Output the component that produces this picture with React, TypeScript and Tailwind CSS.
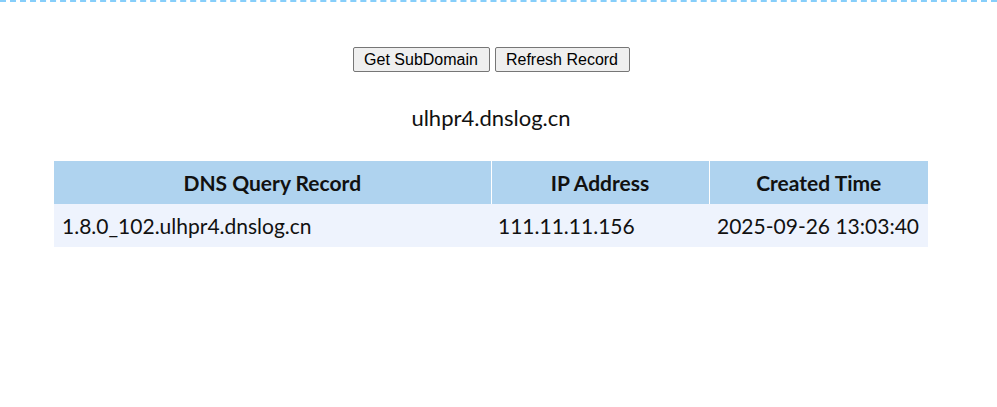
export default function App() {
  const rows = [
    { query: "1.8.0_102.ulhpr4.dnslog.cn", ip: "111.11.11.156", time: "2025-09-26 13:03:40" },
  ]

  return (
    <div className="w-[997px] h-[407px] bg-white border-t-2 border-dashed border-[#87cefa]">
      <div className="w-[982px] flex flex-col items-center">
        {/* Buttons */}
        <div className="mt-[45px] flex gap-[5px]">
          <button className="h-[25px] w-[137px] bg-[#efefef] border border-[#767676] rounded-[2px] text-[16px] text-black [font-family:'Liberation_Sans',Arial,sans-serif]">
            Get SubDomain
          </button>
          <button className="h-[25px] w-[135px] bg-[#efefef] border border-[#767676] rounded-[2px] text-[16px] text-black [font-family:'Liberation_Sans',Arial,sans-serif]">
            Refresh Record
          </button>
        </div>

        {/* Domain */}
        <div className="mt-[29px] text-[22px] text-[#111] [font-family:Lato,sans-serif]">ulhpr4.dnslog.cn</div>

        {/* Records */}
        <table className="mt-[27px] w-[874px] border-collapse [font-family:Lato,sans-serif] text-[21px] text-[#111]">
          <thead>
            <tr className="bg-[#afd3ef] h-[43px]">
              <th className="w-[437px] font-bold text-center border-r border-white">DNS Query Record</th>
              <th className="w-[218px] font-bold text-center border-r border-white">IP Address</th>
              <th className="w-[219px] font-bold text-center">Created Time</th>
            </tr>
          </thead>
          <tbody>
            {rows.map((r) => (
              <tr key={r.query} className="bg-[#eef3fd] h-[43px]">
                <td className="pl-[8px] text-left">{r.query}</td>
                <td className="pl-[7px] text-left">{r.ip}</td>
                <td className="pl-[8px] text-left">{r.time}</td>
              </tr>
            ))}
          </tbody>
        </table>
      </div>
    </div>
  )
}
